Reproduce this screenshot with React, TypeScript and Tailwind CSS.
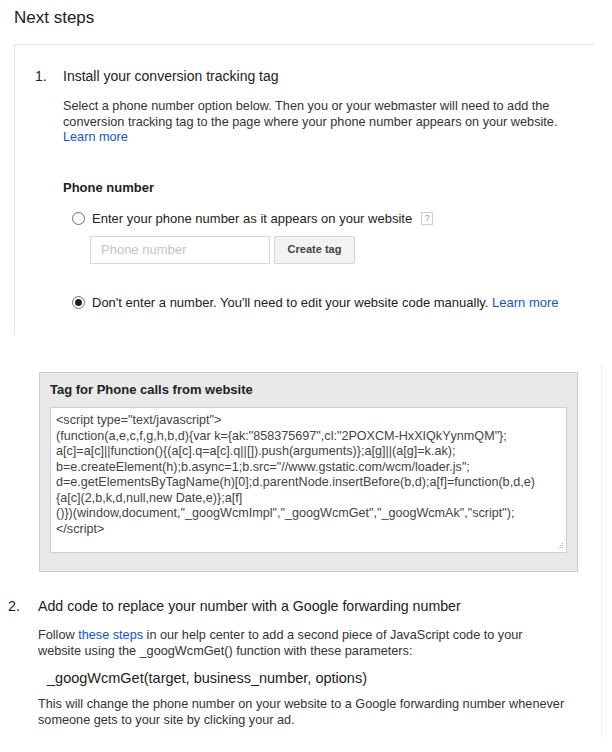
import React from "react";

const codeLines = [
  '<script type="text/javascript">',
  '(function(a,e,c,f,g,h,b,d){var k={ak:"858375697",cl:"2POXCM-HxXIQkYynmQM"};',
  "a[c]=a[c]||function(){(a[c].q=a[c].q||[]).push(arguments)};a[g]||(a[g]=k.ak);",
  'b=e.createElement(h);b.async=1;b.src="//www.gstatic.com/wcm/loader.js";',
  "d=e.getElementsByTagName(h)[0];d.parentNode.insertBefore(b,d);a[f]=function(b,d,e)",
  "{a[c](2,b,k,d,null,new Date,e)};a[f]",
  '()})(window,document,"_googWcmImpl","_googWcmGet","_googWcmAk","script");',
  "</script>",
];

function Radio({ checked }: { checked?: boolean }) {
  return (
    <span className="w-[13px] h-[13px] rounded-full border border-[#6f6f6f] bg-white flex items-center justify-center shrink-0">
      {checked && <span className="w-[7px] h-[7px] rounded-full bg-[#222]" />}
    </span>
  );
}

export default function App() {
  return (
    <div className="w-[612px] h-[752px] bg-white overflow-hidden text-[#333] font-['Liberation_Sans',Arial,sans-serif]">
      <h1 className="pl-[14px] pt-[8px] text-[17px] leading-[20px] text-[#222]">Next steps</h1>

      {/* step 1 panel */}
      <div className="ml-[14px] mt-[16px] w-[581px] h-[290px] border-t border-l border-[#e4e4e4] pt-[22px] pl-[20px]">
        <div className="flex text-[14px] leading-[18px] text-[#222]">
          <span className="w-[28px]">1.</span>
          <span>Install your conversion tracking tag</span>
        </div>
        <div className="pl-[28px]">
          <p className="mt-[14px] text-[12.7px] leading-[15.5px] text-[#333]">
            Select a phone number option below. Then you or your webmaster will need to add the
            <br />
            conversion tracking tag to the page where your phone number appears on your website.
            <br />
            <a className="text-[#1155cc]">Learn more</a>
          </p>

          <div className="mt-[34px] text-[13px] leading-[16px] font-bold text-[#222]">Phone number</div>

          <div className="mt-[15px] ml-[9px] flex items-center gap-[7px] text-[13px] leading-[16px] text-[#222]">
            <Radio />
            <span>Enter your phone number as it appears on your website</span>
            <span className="ml-[2px] w-[12px] h-[13px] border border-[#cfcfcf] text-[9px] leading-[11px] text-[#999] flex items-center justify-center">
              ?
            </span>
          </div>

          <div className="mt-[9px] ml-[27px] flex gap-[4px]">
            <div className="w-[180px] h-[28px] border border-[#d9d9d9] px-[10px] flex items-center text-[13px] text-[#c4c4c4]">
              Phone number
            </div>
            <button className="w-[81px] h-[28px] border border-[#d6d6d6] rounded-[2px] bg-[#f3f3f3] text-[11px] font-bold text-[#444]">
              Create tag
            </button>
          </div>

          <div className="mt-[31px] ml-[9px] flex items-center gap-[7px] text-[13px] leading-[16px] text-[#222]">
            <Radio checked />
            <span>
              Don't enter a number. You'll need to edit your website code manually.{" "}
              <a className="text-[#1155cc]">Learn more</a>
            </span>
          </div>
        </div>
      </div>

      {/* lower area */}
      <div className="mt-[31px] w-[602px] h-[372px] border-r border-[#ededed] pt-[7px]">
        <div className="ml-[39px] w-[539px] h-[200px] bg-[#e9e9e9] border border-[#cccccc] px-[10px] pt-[9px]">
          <div className="text-[13px] leading-[16px] font-bold text-[#222]">Tag for Phone calls from website</div>
          <div className="relative mt-[9px] h-[146px] bg-white border border-[#d0d0d0] px-[5px] pt-[5px] text-[12.6px] leading-[15.5px] text-[#444] whitespace-pre">
            {codeLines.map((l, i) => (
              <div key={i}>{l}</div>
            ))}
            <svg className="absolute right-[2px] bottom-[2px]" width="8" height="8" viewBox="0 0 8 8">
              <rect x="6" y="1" width="1" height="1" fill="#b0b0b0" />
              <rect x="4" y="3" width="1" height="1" fill="#b0b0b0" />
              <rect x="6" y="3" width="1" height="1" fill="#b0b0b0" />
              <rect x="2" y="5" width="1" height="1" fill="#b0b0b0" />
              <rect x="4" y="5" width="1" height="1" fill="#b0b0b0" />
              <rect x="6" y="5" width="1" height="1" fill="#b0b0b0" />
            </svg>
          </div>
        </div>

        <div className="mt-[25px] ml-[8px]">
          <div className="flex text-[14.2px] leading-[18px] text-[#222]">
            <span className="w-[30px]">2.</span>
            <span>Add code to replace your number with a Google forwarding number</span>
          </div>
          <div className="pl-[30px]">
            <p className="mt-[12px] text-[12.7px] leading-[16px] text-[#333]">
              Follow <a className="text-[#1155cc]">these steps</a> in our help center to add a second piece of JavaScript code to your
              <br />
              website using the _googWcmGet() function with these parameters:
            </p>
            <div className="mt-[10px] pl-[9px] text-[14.5px] leading-[18px] text-[#222]">
              _googWcmGet(target, business_number, options)
            </div>
            <p className="mt-[10px] text-[12.7px] leading-[15.5px] text-[#333]">
              This will change the phone number on your website to a Google forwarding number whenever
              <br />
              someone gets to your site by clicking your ad.
            </p>
          </div>
        </div>
      </div>
    </div>
  );
}
